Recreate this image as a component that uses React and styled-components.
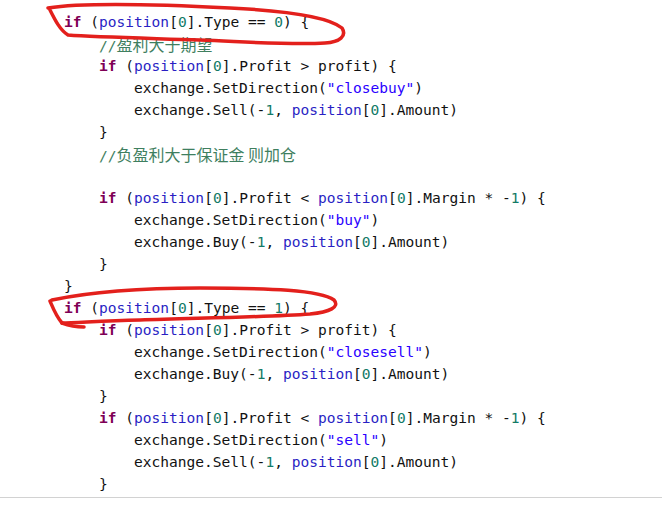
import React from 'react'
import styled, { createGlobalStyle } from 'styled-components'

const GlobalStyle = createGlobalStyle`
    html, body {
        margin: 0;
        padding: 0;
        background: #fff;
    }
`

const Page = styled.div`
    position: relative;
    width: 662px;
    height: 508px;
    overflow: hidden;
    background: #fff;
`

const Editor = styled.div`
    padding: 11px 0 2px 64px;
    border-bottom: 1px solid #d2d2d2;
    font-family: "DejaVu Sans Mono", "Liberation Mono", monospace;
    font-size: 14.55px;
    color: #111;
`

const Line = styled.div`
    height: 22px;
    line-height: 22px;
    white-space: pre;
    padding-left: ${props => props.indent * 35}px;
`

const Kw = styled.span`
    color: #7f0055;
    font-weight: bold;
`
const Field = styled.span`
    color: #2a1fc4;
`
const Str = styled.span`
    color: #2a00ff;
`
const Num = styled.span`
    color: #127a66;
`
const Comment = styled.span`
    color: #3f7f5f;
`
const Cjk = styled.span`
    font-family: "Noto Sans CJK SC", sans-serif;
    font-size: 16px;
`

const Marks = styled.svg`
    position: absolute;
    top: 0;
    left: 0;
    pointer-events: none;
`

const P = () => <><Field>position</Field>[<Num>0</Num>]</>

export default function App() {
    return (
        <Page>
            <GlobalStyle />
            <Editor>
                <Line indent={0}><Kw>if</Kw> (<P />.Type == <Num>0</Num>) {'{'}</Line>
                <Line indent={1}><Comment>//<Cjk>盈利大于期望</Cjk></Comment></Line>
                <Line indent={1}><Kw>if</Kw> (<P />.Profit &gt; profit) {'{'}</Line>
                <Line indent={2}>exchange.SetDirection(<Str>"closebuy"</Str>)</Line>
                <Line indent={2}>exchange.Sell(-<Num>1</Num>, <P />.Amount)</Line>
                <Line indent={1}>{'}'}</Line>
                <Line indent={1}><Comment>//<Cjk>负盈利大于保证金 则加仓</Cjk></Comment></Line>
                <Line indent={1}></Line>
                <Line indent={1}><Kw>if</Kw> (<P />.Profit &lt; <P />.Margin * -<Num>1</Num>) {'{'}</Line>
                <Line indent={2}>exchange.SetDirection(<Str>"buy"</Str>)</Line>
                <Line indent={2}>exchange.Buy(-<Num>1</Num>, <P />.Amount)</Line>
                <Line indent={1}>{'}'}</Line>
                <Line indent={0}>{'}'}</Line>
                <Line indent={0}><Kw>if</Kw> (<P />.Type == <Num>1</Num>) {'{'}</Line>
                <Line indent={1}><Kw>if</Kw> (<P />.Profit &gt; profit) {'{'}</Line>
                <Line indent={2}>exchange.SetDirection(<Str>"closesell"</Str>)</Line>
                <Line indent={2}>exchange.Buy(-<Num>1</Num>, <P />.Amount)</Line>
                <Line indent={1}>{'}'}</Line>
                <Line indent={1}><Kw>if</Kw> (<P />.Profit &lt; <P />.Margin * -<Num>1</Num>) {'{'}</Line>
                <Line indent={2}>exchange.SetDirection(<Str>"sell"</Str>)</Line>
                <Line indent={2}>exchange.Sell(-<Num>1</Num>, <P />.Amount)</Line>
                <Line indent={1}>{'}'}</Line>
            </Editor>
            <Marks width="662" height="508" viewBox="0 0 662 508">
                <g fill="none" stroke="#e3201c" strokeWidth="3.5" strokeLinecap="round" strokeLinejoin="round">
                    <path d="M48 8 C 80 3, 150 4, 230 8 C 290 11, 330 18, 342 28 C 347 36, 340 42, 325 43 C 290 45, 250 42, 200 40 C 140 38, 95 37, 68 35 C 60 30, 55 20, 50 10" />
                    <path d="M52 300 C 90 292, 140 288, 200 288 C 270 288, 320 290, 334 300 C 340 307, 330 312, 310 314 C 270 317, 200 318, 140 320 C 100 321, 75 323, 62 323 C 56 316, 53 308, 50 301" />
                    <path d="M62 323 C 70 326, 78 327, 84 327" />
                </g>
            </Marks>
        </Page>
    )
}
